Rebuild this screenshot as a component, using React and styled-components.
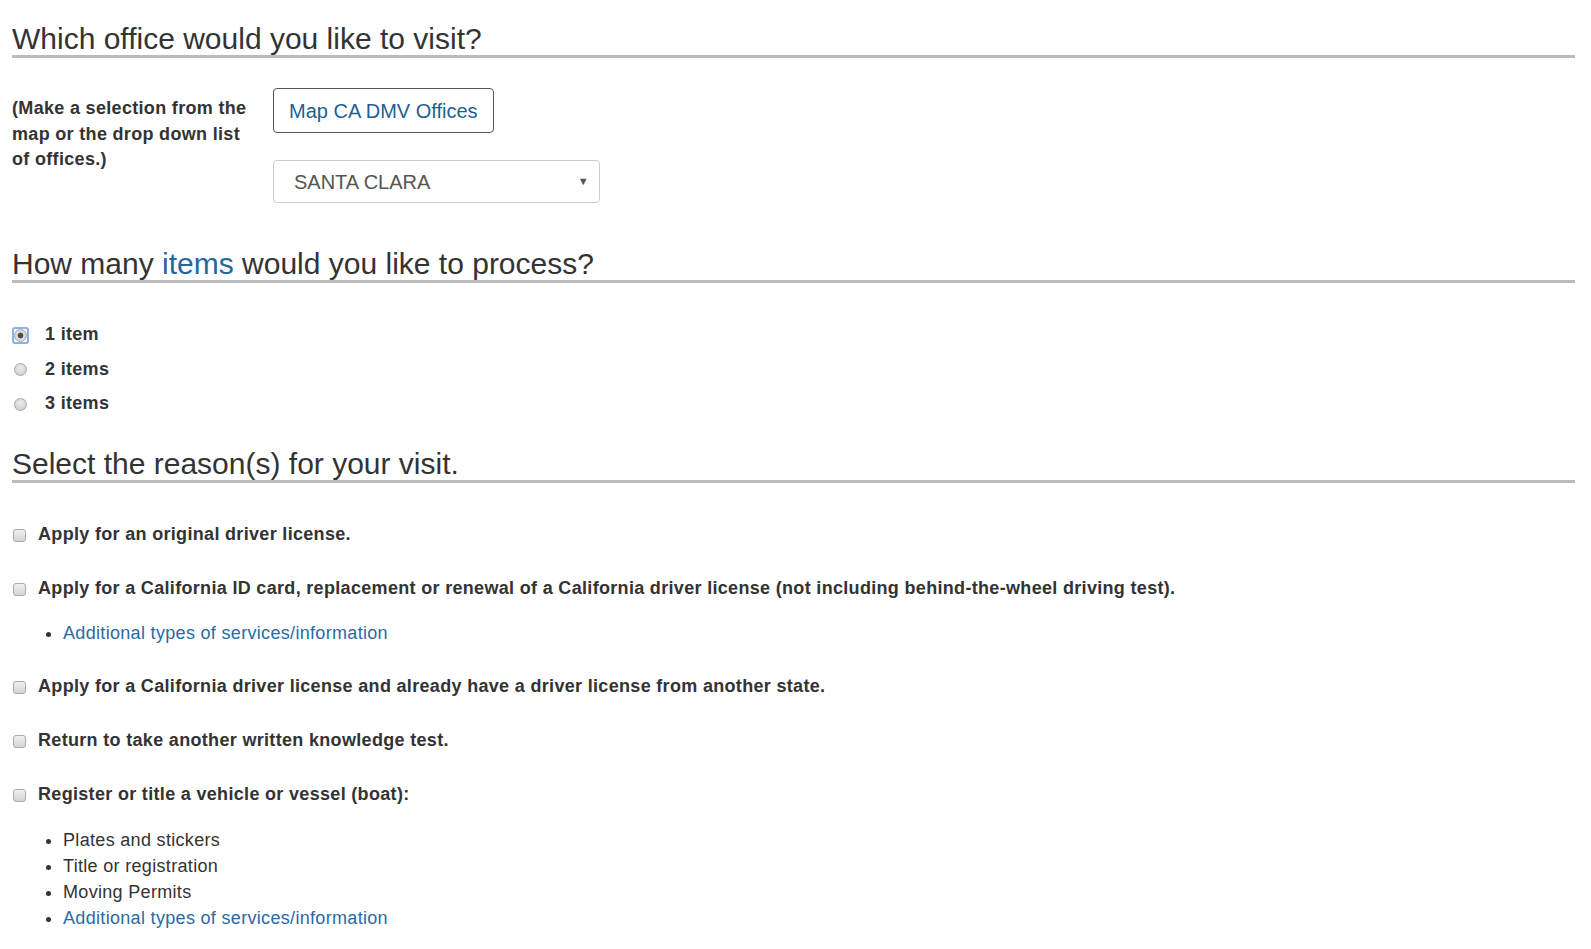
import styled, { createGlobalStyle } from "styled-components";

const GlobalStyle = createGlobalStyle`
  body {
    margin: 0;
    background: #fff;
    color: #333;
    font-family: "Liberation Sans", Arial, sans-serif;
    font-size: 18px;
    line-height: 1.428571;
    letter-spacing: 0.32px;
  }
`;

const Page = styled.div`
  padding: 0 16px 40px 12px;
`;

const SectionTitle = styled.h2`
  margin: ${(p) => p.$top}px 0 0;
  font-size: 30px;
  font-weight: 500;
  line-height: 33px;
  letter-spacing: 0;
  color: #333;
  border-bottom: 3px solid #bbb;
`;

const Highlight = styled.span`
  color: #24679f;
`;

const OfficeRow = styled.div`
  display: grid;
  grid-template-columns: 261px auto;
  margin-top: 30px;
`;

const Hint = styled.p`
  margin: 8px 0 0;
  padding-right: 20px;
  font-weight: bold;
  color: #333;
`;

const Controls = styled.div`
  display: flex;
  flex-direction: column;
  align-items: flex-start;
  gap: 27px;
`;

const MapButton = styled.button`
  padding: 9.5px 15px;
  border: 1px solid #555;
  border-radius: 4px;
  background: #fff;
  color: #1f5f93;
  font-family: inherit;
  font-size: 20px;
  line-height: 24px;
  letter-spacing: 0;
  cursor: pointer;
`;

const SelectWrap = styled.div`
  position: relative;
  width: 327px;
`;

const OfficeSelect = styled.select`
  appearance: none;
  box-sizing: border-box;
  width: 100%;
  height: 43px;
  padding: 0 30px 0 20px;
  border: 1px solid #ccc;
  border-radius: 4px;
  background: #fff;
  color: #555;
  font-family: inherit;
  font-size: 20px;
  letter-spacing: 0;
`;

const Caret = styled.span`
  position: absolute;
  right: 11px;
  top: 50%;
  transform: translateY(-50%);
  font-size: 11px;
  color: #555;
  pointer-events: none;
`;

const RadioList = styled.div`
  margin-top: 35px;
`;

const RadioRow = styled.label`
  display: flex;
  align-items: center;
  height: 34.5px;
  font-weight: bold;
  cursor: pointer;
`;

const RadioFrame = styled.span`
  box-sizing: border-box;
  display: flex;
  align-items: center;
  justify-content: center;
  flex: none;
  width: 17px;
  height: 17px;
  margin-right: 16px;
  border: 2px solid ${(p) => (p.$focused ? "#86b1f1" : "transparent")};
  border-radius: 3px;
`;

const Radio = styled.input`
  appearance: none;
  box-sizing: border-box;
  flex: none;
  width: 13px;
  height: 13px;
  margin: 0;
  border: 1px solid #a8a8a8;
  border-radius: 50%;
  background: radial-gradient(circle at 50% 35%, #ebebeb, #cacaca);

  &:checked {
    background: radial-gradient(circle, #4d4d4d 0 2.6px, #dedede 3.2px, #c9c9c9);
  }
`;

const ReasonList = styled.div`
  margin-top: 39px;
`;

const Reason = styled.div`
  margin-bottom: 28px;
`;

const ReasonLabel = styled.label`
  display: flex;
  align-items: center;
  font-weight: bold;
  cursor: pointer;
`;

const Checkbox = styled.input`
  appearance: none;
  box-sizing: border-box;
  flex: none;
  width: 13px;
  height: 13px;
  margin: 1px 12px 0 1px;
  border: 1px solid #aaa;
  border-radius: 3px;
  background: linear-gradient(#f0f0f0, #d4d4d4);
`;

const SubList = styled.ul`
  margin: 19px 0 0;
  padding-left: 51px;
  list-style: disc;
`;

const SubItem = styled.li`
  line-height: 26px;
  color: #333;
`;

const Link = styled.a`
  color: #2a6aa5;
  text-decoration: none;
`;

const radios = [
  { label: "1 item", value: 1 },
  { label: "2 items", value: 2 },
  { label: "3 items", value: 3 },
];

const reasons = [
  { id: "dl", label: "Apply for an original driver license." },
  {
    id: "id",
    label:
      "Apply for a California ID card, replacement or renewal of a California driver license (not including behind-the-wheel driving test).",
    items: [{ text: "Additional types of services/information", link: true }],
  },
  {
    id: "oos",
    label:
      "Apply for a California driver license and already have a driver license from another state.",
  },
  { id: "kt", label: "Return to take another written knowledge test." },
  {
    id: "vr",
    label: "Register or title a vehicle or vessel (boat):",
    items: [
      { text: "Plates and stickers" },
      { text: "Title or registration" },
      { text: "Moving Permits" },
      { text: "Additional types of services/information", link: true },
    ],
  },
];

const App = () => {
  return (
    <Page>
      <GlobalStyle />

      <SectionTitle $top={22}>Which office would you like to visit?</SectionTitle>
      <OfficeRow>
        <Hint>(Make a selection from the map or the drop down list of offices.)</Hint>
        <Controls>
          <MapButton type="button">Map CA DMV Offices</MapButton>
          <SelectWrap>
            <OfficeSelect defaultValue="santa-clara" aria-label="Office">
              <option value="santa-clara">SANTA CLARA</option>
            </OfficeSelect>
            <Caret>▼</Caret>
          </SelectWrap>
        </Controls>
      </OfficeRow>

      <SectionTitle $top={44}>
        How many <Highlight>items</Highlight> would you like to process?
      </SectionTitle>
      <RadioList>
        {radios.map((r) => (
          <RadioRow key={r.value}>
            <RadioFrame $focused={r.value === 1}>
              <Radio type="radio" name="items" defaultChecked={r.value === 1} />
            </RadioFrame>
            {r.label}
          </RadioRow>
        ))}
      </RadioList>

      <SectionTitle $top={25.5}>Select the reason(s) for your visit.</SectionTitle>
      <ReasonList>
        {reasons.map((reason) => (
          <Reason key={reason.id}>
            <ReasonLabel>
              <Checkbox type="checkbox" />
              {reason.label}
            </ReasonLabel>
            {reason.items && (
              <SubList>
                {reason.items.map((item) => (
                  <SubItem key={item.text}>
                    {item.link ? <Link href="#">{item.text}</Link> : item.text}
                  </SubItem>
                ))}
              </SubList>
            )}
          </Reason>
        ))}
      </ReasonList>
    </Page>
  );
};

export default App;
